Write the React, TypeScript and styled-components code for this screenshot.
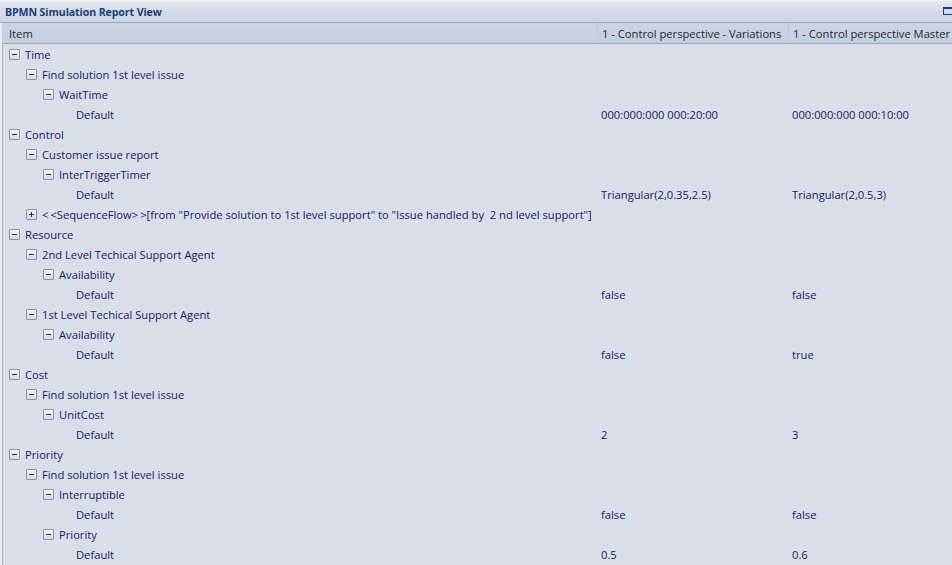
import styled, { createGlobalStyle } from 'styled-components';

type Row = {
  level: number;
  label: string;
  toggle?: 'minus' | 'plus';
  values?: [string, string];
};

const rows: Row[] = [
  { level: 0, label: 'Time', toggle: 'minus' },
  { level: 1, label: 'Find solution 1st level issue', toggle: 'minus' },
  { level: 2, label: 'WaitTime', toggle: 'minus' },
  { level: 3, label: 'Default', values: ['000:000:000 000:20:00', '000:000:000 000:10:00'] },
  { level: 0, label: 'Control', toggle: 'minus' },
  { level: 1, label: 'Customer issue report', toggle: 'minus' },
  { level: 2, label: 'InterTriggerTimer', toggle: 'minus' },
  { level: 3, label: 'Default', values: ['Triangular(2,0.35,2.5)', 'Triangular(2,0.5,3)'] },
  {
    level: 1,
    label:
      '<<SequenceFlow>>[from "Provide solution to 1st level support" to "Issue handled by  2 nd level support"]',
    toggle: 'plus',
  },
  { level: 0, label: 'Resource', toggle: 'minus' },
  { level: 1, label: '2nd Level Techical Support Agent', toggle: 'minus' },
  { level: 2, label: 'Availability', toggle: 'minus' },
  { level: 3, label: 'Default', values: ['false', 'false'] },
  { level: 1, label: '1st Level Techical Support Agent', toggle: 'minus' },
  { level: 2, label: 'Availability', toggle: 'minus' },
  { level: 3, label: 'Default', values: ['false', 'true'] },
  { level: 0, label: 'Cost', toggle: 'minus' },
  { level: 1, label: 'Find solution 1st level issue', toggle: 'minus' },
  { level: 2, label: 'UnitCost', toggle: 'minus' },
  { level: 3, label: 'Default', values: ['2', '3'] },
  { level: 0, label: 'Priority', toggle: 'minus' },
  { level: 1, label: 'Find solution 1st level issue', toggle: 'minus' },
  { level: 2, label: 'Interruptible', toggle: 'minus' },
  { level: 3, label: 'Default', values: ['false', 'false'] },
  { level: 2, label: 'Priority', toggle: 'minus' },
  { level: 3, label: 'Default', values: ['0.5', '0.6'] },
];

function Label({ text }: { text: string }) {
  // the stereotype chevrons are drawn with a little air between them
  const m = text.match(/^<<(.+?)>>(.*)$/);
  if (!m) return <>{text}</>;
  return (
    <>
      <S.Chevron>{'<'}</S.Chevron>
      {'<'}
      {m[1]}
      <S.Chevron>{'>'}</S.Chevron>
      {'>'}
      {m[2]}
    </>
  );
}

export default function App() {
  return (
    <>
      <GlobalStyle />
      <S.Window>
        <S.TitleBar>
          <S.Title>BPMN Simulation Report View</S.Title>
          <S.RestoreIcon width='9' height='9' viewBox='0 0 9 9'>
            <rect x='0.5' y='0.5' width='10' height='7' fill='none' stroke='#1d3f7a' />
            <line x1='0' y1='1.5' x2='9' y2='1.5' stroke='#1d3f7a' />
          </S.RestoreIcon>
        </S.TitleBar>
        <S.Body>
          <S.HeaderRow>
            <S.HeaderCell>Item</S.HeaderCell>
            <S.HeaderCell $divider>1 - Control perspective - Variations</S.HeaderCell>
            <S.HeaderCell $divider>1 - Control perspective Master</S.HeaderCell>
          </S.HeaderRow>
          {rows.map((row, i) => (
            <S.Row key={i}>
              <S.ItemCell $level={row.level}>
                {row.toggle ? (
                  <S.Toggle>
                    <svg width='5' height='5' viewBox='0 0 5 5'>
                      <rect x='0' y='2' width='5' height='1' fill='#2a2a2a' />
                      {row.toggle === 'plus' && <rect x='2' y='0' width='1' height='5' fill='#2a2a2a' />}
                    </svg>
                  </S.Toggle>
                ) : (
                  <S.Spacer />
                )}
                <S.ItemText>
                  <Label text={row.label} />
                </S.ItemText>
              </S.ItemCell>
              <S.ValueCell>{row.values?.[0]}</S.ValueCell>
              <S.ValueCell>{row.values?.[1]}</S.ValueCell>
            </S.Row>
          ))}
        </S.Body>
      </S.Window>
    </>
  );
}

const GlobalStyle = createGlobalStyle`
  html, body {
    margin: 0;
    padding: 0;
    background: #d9dee8;
    overflow: hidden;
  }
  body {
    font-family: 'Open Sans', 'Noto Sans', sans-serif;
    font-size: 11.2px;
  }
`;

const S = {
  Window: styled.div`
    width: 952px;
    height: 565px;
    display: flex;
    flex-direction: column;
    background: #d9dee8;
    overflow: hidden;
  `,

  TitleBar: styled.div`
    height: 23px;
    flex: none;
    display: flex;
    align-items: center;
    justify-content: space-between;
    padding-left: 5px;
    box-sizing: border-box;
    background: linear-gradient(#eef1f6 0px, #e2e7ef 3px, #d3dbe8 12px, #cbd4e3 22px);
    border-bottom: 1px solid #9ba6b8;
  `,

  Title: styled.span`
    font-weight: 700;
    font-size: 10.6px;
    color: #1c3f79;
    letter-spacing: -0.1px;
    margin-top: 1px;
  `,

  RestoreIcon: styled.svg`
    margin-top: 1px;
  `,

  Body: styled.div`
    flex: 1;
    display: flex;
    flex-direction: column;
    border-left: 2px solid #e8ebf1;
    box-shadow: inset 1px 0 0 #a9b1bf;
  `,

  HeaderRow: styled.div`
    height: 21px;
    flex: none;
    display: grid;
    grid-template-columns: 595px 191px 1fr;
    align-items: stretch;
    background: linear-gradient(#cdd5e3, #c6cfdf);
    border-bottom: 1px solid #98a3b6;
    color: #1e2533;
    box-sizing: border-box;
  `,

  HeaderCell: styled.div<{ $divider?: boolean }>`
    display: flex;
    align-items: center;
    padding-left: ${({ $divider }) => ($divider ? '4px' : '7px')};
    white-space: nowrap;
    overflow: hidden;
    border-left: ${({ $divider }) => ($divider ? '1px solid #b3cbea' : 'none')};
  `,

  Row: styled.div`
    height: 20px;
    flex: none;
    display: grid;
    grid-template-columns: 595px 191px 1fr;
    align-items: center;
    color: #1a1862;
  `,

  ItemCell: styled.div<{ $level: number }>`
    display: flex;
    align-items: center;
    padding-left: ${({ $level }) => 7 + $level * 17}px;
    white-space: nowrap;
    overflow: visible;
  `,

  ItemText: styled.span`
    white-space: pre;
  `,

  Toggle: styled.span`
    width: 11px;
    height: 11px;
    flex: none;
    box-sizing: border-box;
    margin-right: 5px;
    display: flex;
    align-items: center;
    justify-content: center;
    border: 1px solid #8993a5;
    border-radius: 1px;
    background: linear-gradient(#f4f6f9, #d4d9e2);

    svg {
      display: block;
    }
  `,

  Spacer: styled.span`
    width: 16px;
    flex: none;
  `,

  Chevron: styled.span`
    margin-right: 2px;
  `,

  ValueCell: styled.div`
    padding-left: 4px;
    white-space: nowrap;
    overflow: hidden;
  `,
};
